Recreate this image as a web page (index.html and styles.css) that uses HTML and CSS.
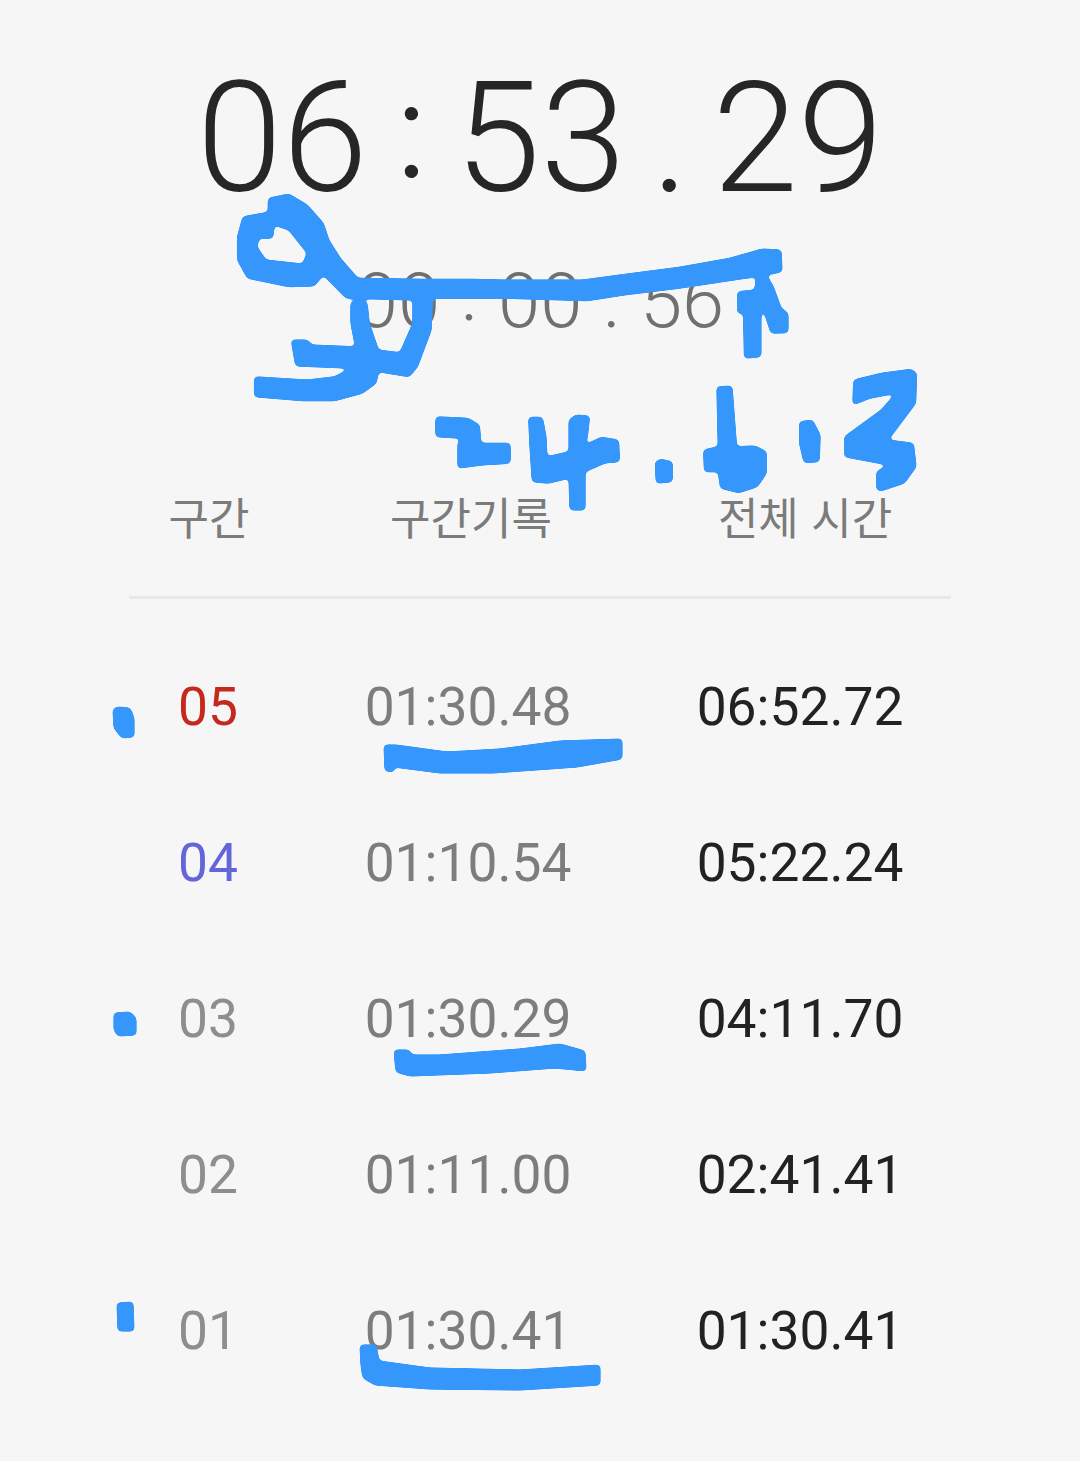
FILE: index.html
```html
<!DOCTYPE html>
<html lang="ko">
<head>
<meta charset="utf-8">
<title>Stopwatch</title>
<link rel="stylesheet" href="styles.css">
</head>
<body>
<main class="screen">
  <div class="total">06 <span class="colon">:</span> 53 <span class="dot">.</span> 29</div>
  <div class="lap-current">00 <span class="colon">:</span> 00 <span class="dot">.</span> 56</div>
  <div class="grid head">
    <div>구간</div>
    <div>구간기록</div>
    <div>전체 시간</div>
  </div>
  <div class="rule"></div>
  <div class="rows">
    <div class="grid row"><div class="red">05</div><div class="split">01:30.48</div><div class="sum">06:52.72</div></div>
    <div class="grid row"><div class="blue">04</div><div class="split">01:10.54</div><div class="sum">05:22.24</div></div>
    <div class="grid row"><div class="num">03</div><div class="split">01:30.29</div><div class="sum">04:11.70</div></div>
    <div class="grid row"><div class="num">02</div><div class="split">01:11.00</div><div class="sum">02:41.41</div></div>
    <div class="grid row"><div class="num">01</div><div class="split">01:30.41</div><div class="sum">01:30.41</div></div>
  </div>
  <svg class="ink" viewBox="0 0 1080 1461" aria-hidden="true">
    <defs>
      <filter id="smooth" x="0" y="0" width="1080" height="1461" filterUnits="userSpaceOnUse" color-interpolation-filters="sRGB">
        <feGaussianBlur stdDeviation="2.2"/>
        <feColorMatrix type="matrix" values="0 0 0 0 0.208  0 0 0 0 0.592  0 0 0 0 0.984  0 0 0 9 -3"/>
      </filter>
    </defs>
    <g class="ink-all" filter="url(#smooth)">
      <g transform="translate(220 180) scale(.4592 .33333)">
        <path fill-rule="evenodd" d="M105 55 150 42 190 75 225 130 237 180 262 235 300 295 440 298 550 298 620 300 790 300 870 285 1000 262 1110 235 1180 207 1222 210 1224 275 1190 285 1205 320 1222 385 1237 400 1237 458 1200 460 1185 395 1178 395 1178 530 1142 535 1140 400 1127 400 1127 335 1165 330 1168 290 1000 325 880 345 800 362 620 355 465 355 462 370 460 450 430 560 412 590 345 575 340 610 310 640 250 662 180 662 75 650 75 590 190 600 250 590 285 565 165 558 155 480 190 480 200 495 295 500 285 430 285 365 320 365 325 430 345 510 392 518 420 430 420 360 275 355 225 285 205 318 150 320 60 295 38 240 38 170 50 110 105 97ZM80 200 85 175 115 175 118 135 150 150 190 220 180 252 100 240Z"/>
        <path d="M470 710 540 715 565 735 568 790 632 790 632 850 570 855 518 865 518 790 525 775 470 770Z"/>
        <path d="M672 712 702 712 710 770 712 830 760 815 760 720 775 705 805 708 800 770 795 795 830 772 868 780 870 845 840 848 795 875 795 990 762 990 760 895 715 910 680 905 675 800Z"/>
        <path d="M948 845 960 838 985 845 985 905 950 910Z"/>
        <path d="M1082 620 1115 618 1125 800 1165 798 1190 815 1190 880 1170 920 1130 938 1090 925 1085 875 1055 875 1053 810 1085 800Z"/>
        <path d="M1262 725 1290 720 1307 765 1305 845 1272 848 1262 790Z"/>
        <path d="M1380 600 1440 580 1505 568 1517 580 1515 670 1455 780 1510 790 1516 860 1490 910 1440 932 1430 930 1430 875 1455 855 1360 830 1360 770 1440 690 1472 640 1415 655 1378 675Z"/>
      </g>
      <path d="M113 709 118 707 130 708 134 718 134 737 122 738 114 728Z"/>
      <path d="M384 745 396 745 447 752 500 749 560 741 622 739 622 759 577 767 493 773 440 773 394 767 394 772 385 771Z"/>
      <path d="M114 1013 130 1012 136 1018 136 1035 118 1036 114 1030Z"/>
      <path d="M394 1050 409 1050 412 1055 440 1055 520 1049 560 1044 585 1051 586 1071 555 1068 490 1073 410 1076 396 1072Z"/>
      <path d="M117 1303 133 1302 134 1331 118 1331Z"/>
      <path d="M360 1345 376 1345 379 1361 430 1368 520 1370 600 1365 600 1385 520 1390 430 1389 375 1385 363 1378 361 1365Z"/>
    </g>
  </svg>
</main>
</body>
</html>
```

FILE: styles.css
```css
* { box-sizing: border-box; }
html, body { margin: 0; padding: 0; }
body {
  width: 1080px;
  height: 1461px;
  overflow: hidden;
  background: #f6f6f6;
  font-family: Roboto, "Noto Sans CJK KR", sans-serif;
}
.screen {
  position: relative;
  height: 1461px;
  display: flex;
  flex-direction: column;
  align-items: center;
  padding-top: 48px;
}
.total {
  font-size: 154px;
  line-height: 182px;
  font-weight: 300;
  word-spacing: -11px;
  color: #262626;
  white-space: pre;
}
.colon, .dot {
  font-family: Lato, sans-serif;
  font-weight: 300;
  font-size: .93em;
  line-height: 0;
}
.colon { vertical-align: .1em; }
.lap-current {
  margin-top: 26px;
  font-size: 76px;
  line-height: 90px;
  font-weight: 300;
  word-spacing: 2px;
  color: #707070;
  white-space: pre;
}
.grid {
  width: 822px;
  display: grid;
  text-align: center;
}
.head {
  grid-template-columns: 160px 364px 304px;
  margin-top: 140px;
  font-size: 44px;
  line-height: 60px;
  color: #7b7b7b;
  font-family: "Noto Sans CJK KR", sans-serif;
  font-weight: 400;
}
.rule {
  width: 822px;
  height: 3px;
  margin-top: 50px;
  background: #e8e8e8;
}
.rows {
  width: 822px;
  display: flex;
  flex-direction: column;
  margin-top: 77px;
  gap: 94px;
}
.row {
  grid-template-columns: 158px 362px 302px;
  font-size: 53.3px;
  line-height: 62px;
}
.red { color: #c5281c; }
.blue { color: #6366d8; }
.num { color: #8e8e8e; }
.split { color: #7d7d7d; }
.sum { color: #222222; }
.ink {
  position: absolute;
  left: 0;
  top: 0;
  width: 1080px;
  height: 1461px;
}
```
